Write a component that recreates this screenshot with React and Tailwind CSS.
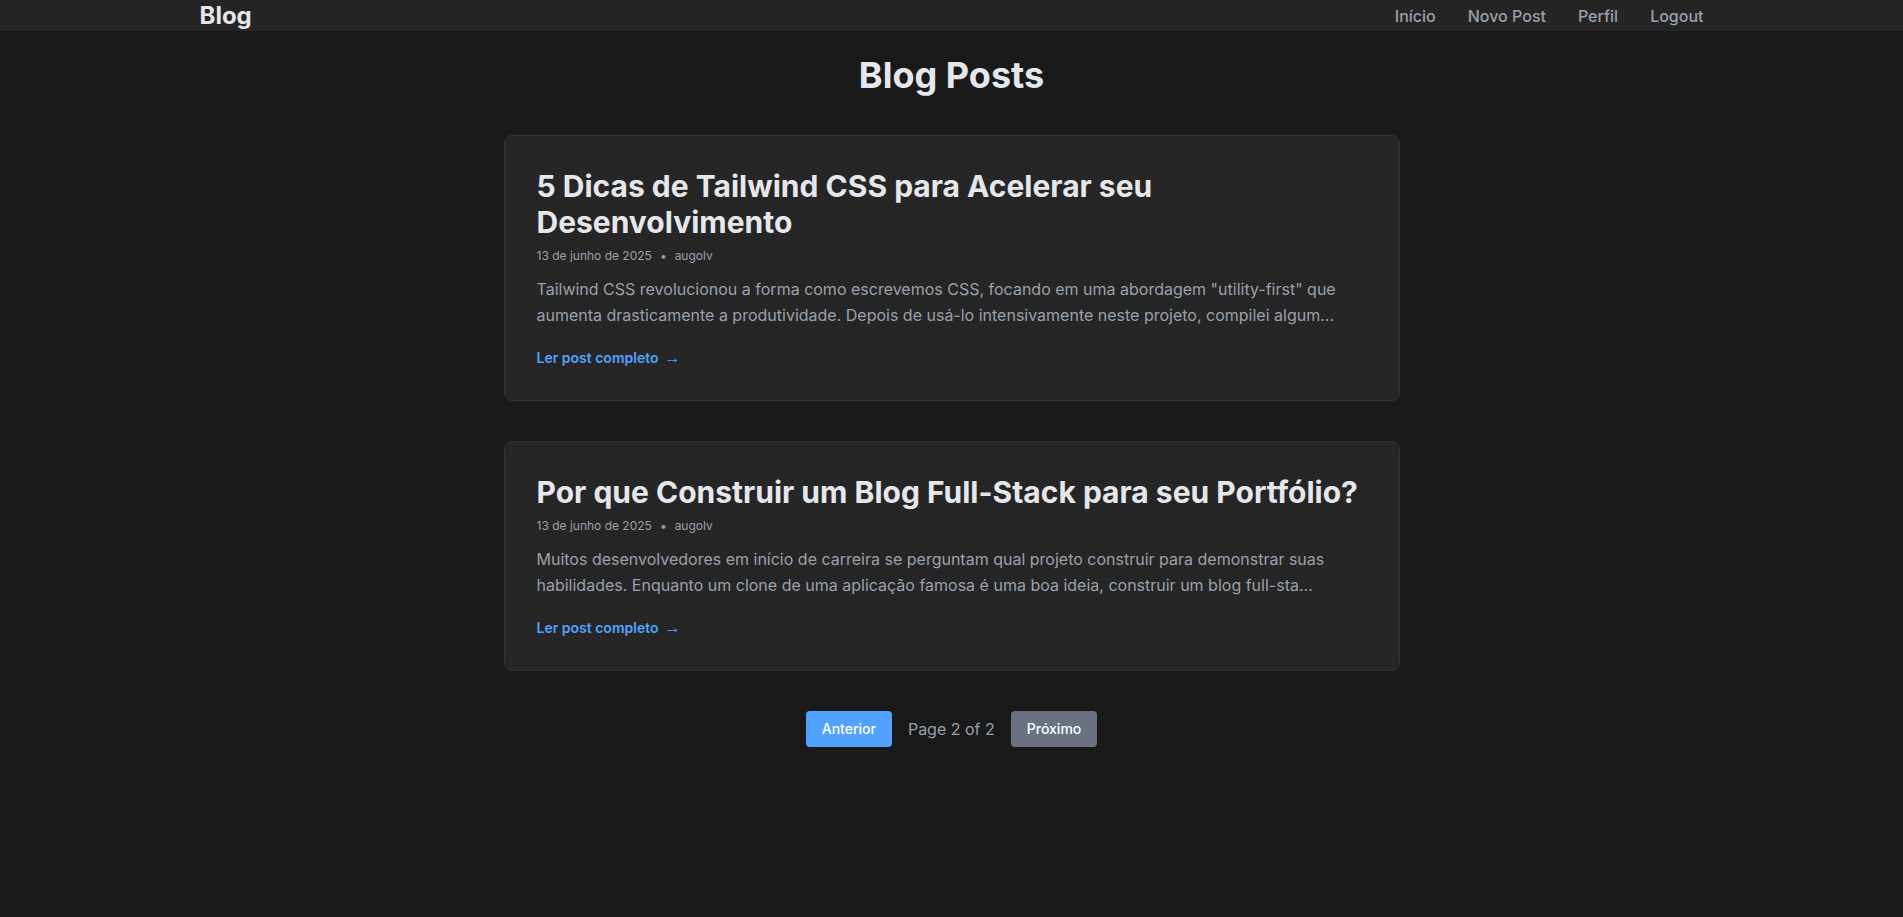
// App.jsx

const posts = [
  {
    id: 1,
    title: '5 Dicas de Tailwind CSS para Acelerar seu Desenvolvimento',
    date: '13 de junho de 2025',
    author: 'augolv',
    excerpt:
      'Tailwind CSS revolucionou a forma como escrevemos CSS, focando em uma abordagem "utility-first" que aumenta drasticamente a produtividade. Depois de usá-lo intensivamente neste projeto, compilei algum...',
  },
  {
    id: 2,
    title: 'Por que Construir um Blog Full-Stack para seu Portfólio?',
    date: '13 de junho de 2025',
    author: 'augolv',
    excerpt:
      'Muitos desenvolvedores em início de carreira se perguntam qual projeto construir para demonstrar suas habilidades. Enquanto um clone de uma aplicação famosa é uma boa ideia, construir um blog full-sta...',
  },
];

function Navbar() {
  return (
    <nav className="bg-[#252525]">
      <div className="container mx-auto px-4 h-[31px] flex items-center justify-between">
        <a href="#" className="text-2xl font-bold text-gray-200">Blog</a>
        <div className="flex items-center gap-8 text-base font-medium text-gray-400">
          <a href="#">Início</a>
          <a href="#">Novo Post</a>
          <a href="#">Perfil</a>
          <a href="#">Logout</a>
        </div>
      </div>
    </nav>
  );
}

function PostCard({ post }) {
  return (
    <article className="bg-[#262626] border border-[#333333] rounded-lg px-8 py-8">
      <h2 className="text-3xl font-bold text-gray-200">{post.title}</h2>
      <div className="mt-2 text-xs text-gray-400">
        <span>{post.date}</span>
        <span className="mx-2">•</span>
        <span>{post.author}</span>
      </div>
      <p className="mt-3 text-base leading-relaxed text-gray-400">{post.excerpt}</p>
      <a href="#" className="mt-5 block w-fit text-sm leading-5 font-semibold text-blue-400">
        Ler post completo
        <span className="ml-1.5 text-base leading-5 font-normal font-['Liberation_Sans',sans-serif]">→</span>
      </a>
    </article>
  );
}

export default function App() {
  return (
    <div className="min-h-screen bg-[#1a1a1a] font-['Inter',sans-serif]">
      <Navbar />
      <main className="container mx-auto px-4 pt-6 pb-10">
        <h1 className="text-4xl font-bold text-center text-gray-200 mb-10">Blog Posts</h1>

        <div className="max-w-4xl mx-auto flex flex-col gap-10">
          {posts.map((post) => (
            <PostCard key={post.id} post={post} />
          ))}
        </div>

        <div className="mt-10 flex items-center justify-center gap-4">
          <button className="px-4 py-2 rounded bg-blue-400 text-white text-sm font-medium">
            Anterior
          </button>
          <span className="text-base text-gray-400">Page 2 of 2</span>
          <button disabled className="px-4 py-2 rounded bg-gray-500 text-white text-sm font-medium">
            Próximo
          </button>
        </div>
      </main>
    </div>
  );
}
